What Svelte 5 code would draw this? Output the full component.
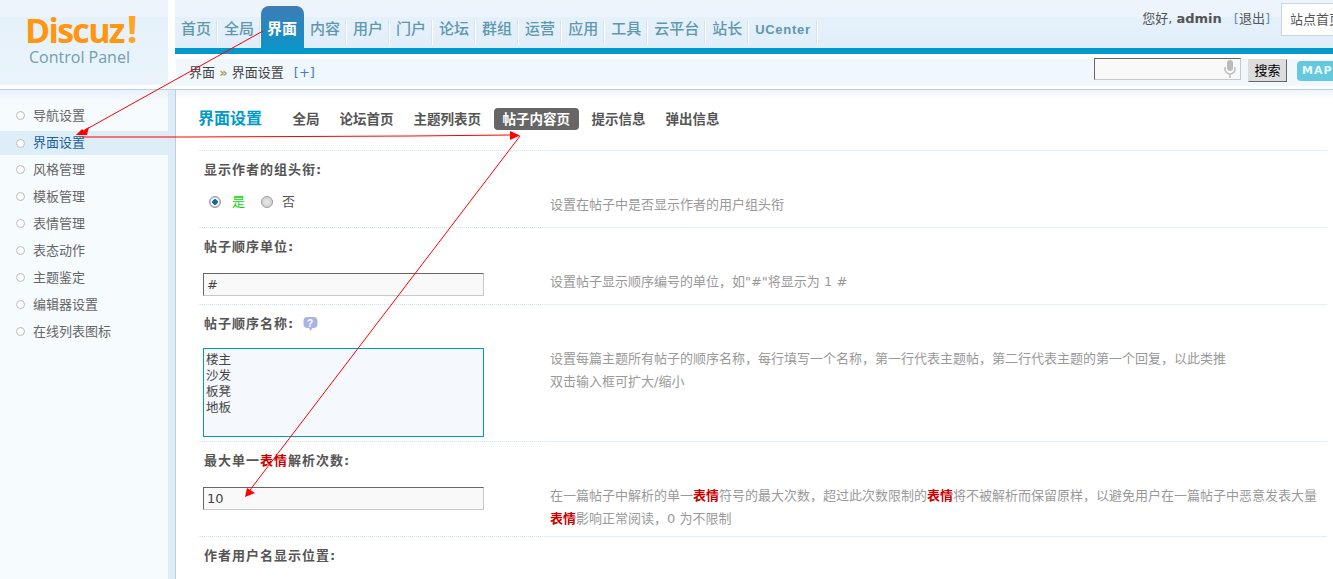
<script>
	const navItems = ['首页', '全局', '界面', '内容', '用户', '门户', '论坛', '群组', '运营', '应用', '工具', '云平台', '站长', 'UCenter'];
	const sideItems = ['导航设置', '界面设置', '风格管理', '模板管理', '表情管理', '表态动作', '主题鉴定', '编辑器设置', '在线列表图标'];
	const tabs = ['全局', '论坛首页', '主题列表页', '帖子内容页', '提示信息', '弹出信息'];
</script>

<div class="page">
	<header class="top">
		<div class="logo">
			<div class="brand">Discuz<span class="bang">!</span></div>
			<div class="sub">Control Panel</div>
		</div>
		<div class="top-main">
			<div class="nav-row">
				<nav class="nav">
					{#each navItems as item}
						<a class="nav-item" class:on={item === '界面'} class:latin={item === 'UCenter'}>{item}</a>
					{/each}
				</nav>
				<div class="user">
					<span>您好, <b>admin</b></span>
					<span class="logout"><i>[</i>退出<i>]</i></span>
					<div class="home-box">站点首页</div>
				</div>
			</div>
			<div class="bluebar"></div>
			<div class="crumb">
				<div class="path">界面 <span class="raquo">»</span> 界面设置 <span class="plus">[+]</span></div>
				<div class="search">
					<div class="search-input">
						<svg width="12" height="19" viewBox="0 0 12 19">
							<rect x="3" y="0" width="6" height="11" rx="3" fill="#bbb" />
							<path d="M1 7v2a5 5 0 0 0 10 0V7M6 14v4" fill="none" stroke="#bbb" stroke-width="1.5" />
						</svg>
					</div>
					<div class="search-btn">搜索</div>
					<div class="map">MAP</div>
				</div>
			</div>
		</div>
	</header>

	<div class="body">
		<aside class="side">
			<ul>
				{#each sideItems as item}
					<li class:on={item === '界面设置'}><span class="dot"></span>{item}</li>
				{/each}
			</ul>
		</aside>

		<main class="main">
			<div class="heading">
				<h3>界面设置</h3>
				<div class="tabs">
					{#each tabs as tab}
						<span class="tab" class:on={tab === '帖子内容页'}>{tab}</span>
					{/each}
				</div>
			</div>

			<section class="row" style="height: 77px">
				<div class="cell">
					<div class="label">显示作者的组头衔:</div>
					<div class="radios">
						<span class="radio checked"></span><span class="yes">是</span>
						<span class="radio"></span><span class="no">否</span>
					</div>
				</div>
				<div class="desc">设置在帖子中是否显示作者的用户组头衔</div>
			</section>

			<section class="row" style="height: 77px">
				<div class="cell">
					<div class="label">帖子顺序单位:</div>
					<div class="txt">#</div>
				</div>
				<div class="desc">设置帖子显示顺序编号的单位，如"#"将显示为 1 #</div>
			</section>

			<section class="row" style="height: 137px">
				<div class="cell">
					<div class="label">
						帖子顺序名称:
						<svg class="help" width="15" height="16" viewBox="0 0 15 16">
							<path d="M4.500 1h6a4 4 0 0 1 4 4v3a4 4 0 0 1-4 4H9.500L7.500 15 6 12H4.500a4 4 0 0 1-4-4V5a4 4 0 0 1 4-4z" fill="#a9b4e4" />
							<text x="7.5" y="10.5" text-anchor="middle">?</text>
						</svg>
					</div>
					<div class="area">楼主<br />沙发<br />板凳<br />地板</div>
				</div>
				<div class="desc">
					设置每篇主题所有帖子的顺序名称，每行填写一个名称，第一行代表主题帖，第二行代表主题的第一个回复，以此类推<br />双击输入框可扩大/缩小
				</div>
			</section>

			<section class="row" style="height: 95px">
				<div class="cell">
					<div class="label">最大单一<em>表情</em>解析次数:</div>
					<div class="txt num">10</div>
				</div>
				<div class="desc">
					在一篇帖子中解析的单一<em>表情</em>符号的最大次数，超过此次数限制的<em>表情</em>将不被解析而保留原样，以避免用户在一篇帖子中恶意发表大量<br /><em>表情</em>影响正常阅读，0 为不限制
				</div>
			</section>

			<section class="row last">
				<div class="cell">
					<div class="label">作者用户名显示位置:</div>
				</div>
			</section>
		</main>
	</div>

	<svg class="arrows" width="1333" height="579" viewBox="0 0 1333 579">
		<g fill="none" stroke="#f00" stroke-width="1">
			<path d="M263 31L85 130" />
			<path d="M82 137H187L410 136L510 135" />
			<path d="M520 136L250 490" />
		</g>
		<g fill="#f00">
			<path d="M76 135L89 127L87 135Z" />
			<path d="M76 135L82 129L87 135Z" />
			<path d="M510 131L520 135.500L510 140Z" />
			<path d="M245 497L247 488L255 493Z" />
		</g>
	</svg>
</div>

<style>
	:global(body) {
		background: #fff;
	}
	.page {
		position: relative;
		height: 579px;
		overflow: hidden;
		font: 13px/1.5 "DejaVu Sans", "Noto Sans CJK SC", sans-serif;
		color: #444;
		background: #fff;
	}

	.top {
		display: grid;
		grid-template-columns: 175px 1fr;
		height: 90px;
		border-bottom: 1px solid #b9d0e0;
		box-sizing: border-box;
		background: #fff;
	}
	.logo {
		height: 85px;
		padding: 11px 0 0 25px;
		box-sizing: border-box;
		margin-right: 7px;
		background: linear-gradient(#edf4fc 0, #edf4fc 17px, #e5f1fa 17px, #ebf4fb 85px);
	}
	.brand {
		font: bold 34px/34px "Open Sans", sans-serif;
		letter-spacing: -1.7px;
		color: #ff960f;
	}
	.bang {
		font-size: 38px;
		margin-left: 3px;
		color: #ffa424;
	}
	.sub {
		font: 16px/20px "Open Sans", sans-serif;
		color: #6f9fb2;
		margin: 0 0 0 4px;
	}

	.top-main {
		display: flex;
		flex-direction: column;
		min-width: 0;
		border-left: 1px solid #fff;
	}
	.nav-row {
		display: flex;
		height: 48px;
		margin-left: -1px;
		justify-content: space-between;
		background: linear-gradient(#edf4fc 0, #edf4fc 17px, #e5f1fa 17px, #e1eefa 48px);
	}
	.nav {
		display: flex;
		padding: 6px 0 0;
		height: 54px;
		box-sizing: border-box;
	}
	.nav-item {
		position: relative;
		display: block;
		padding: 0 7px 0 6px;
		height: 47px;
		line-height: 47px;
		font-size: 15px;
		font-weight: 500;
		color: #5f97ad;
		box-sizing: border-box;
		white-space: nowrap;
	}
	.nav-item::after {
		content: '';
		position: absolute;
		right: 0;
		top: 14px;
		height: 25px;
		width: 2px;
		background: #fff;
		border-left: 1px solid #d9e5ee;
		box-sizing: border-box;
	}
	.nav-item.on {
		width: 43px;
		color: #fff;
		font-weight: 700;
		background: linear-gradient(#3f7cb4, #0797cc);
		border-radius: 8px 8px 0 0;
	}
	.nav-item.on::after {
		display: none;
	}
	.nav-item.latin {
		font-size: 13px;
		font-weight: 700;
		font-family: "Liberation Sans", sans-serif;
		letter-spacing: 0.7px;
	}
	.user {
		display: flex;
		align-items: flex-start;
		flex: none;
		color: #555;
		padding-top: 3px;
		line-height: 31px;
		font-size: 13px;
	}
	.user b {
		color: #555;
	}
	.logout {
		margin: 0 11px 0 12px;
	}
	.logout i {
		font-style: normal;
		color: #5e8fc0;
	}
	.home-box {
		width: 52px;
		height: 33px;
		overflow: hidden;
		white-space: nowrap;
		padding-left: 8px;
		border: 1px solid #c5d8dd;
		border-right: 0;
		background: #fff;
		box-sizing: border-box;
	}

	.bluebar {
		height: 6px;
		background: #0099cc;
		margin-left: -1px;
	}
	.crumb {
		display: flex;
		justify-content: space-between;
		align-items: center;
		height: 27px;
		margin-top: 5px;
		background: #f0f8fd;
		padding-left: 13px;
	}
	.path {
		font-size: 13px;
		color: #444;
	}
	.raquo {
		color: #a89a55;
		font-weight: bold;
	}
	.plus {
		margin-left: 6px;
		color: #3f7ec0;
	}
	.search {
		display: flex;
		align-items: flex-start;
		height: 27px;
	}
	.search-input {
		display: flex;
		justify-content: flex-end;
		align-items: center;
		width: 147px;
		height: 22px;
		margin-top: -1px;
		padding-right: 4px;
		box-sizing: border-box;
		background: #f9f9f9;
		border: 1px solid #c8c8c8;
		border-top-color: #666;
		border-left-color: #666;
	}
	.search-btn {
		width: 39px;
		height: 23px;
		margin: 0 10px 0 7px;
		line-height: 21px;
		text-align: center;
		color: #000;
		box-sizing: border-box;
		background: #dcdcdc;
		border: 1px solid #dcdcdc;
		border-right-color: #666;
		border-bottom-color: #666;
	}
	.map {
		width: 36px;
		height: 20px;
		margin-top: 2px;
		padding-left: 5px;
		box-sizing: border-box;
		font: bold 11px/20px "DejaVu Sans", sans-serif;
		letter-spacing: 1px;
		color: #e8fafd;
		background: #66c8dd;
		border-radius: 4px 0 0 4px;
		overflow: hidden;
	}

	.body {
		display: grid;
		grid-template-columns: 175px 1fr;
		height: 489px;
	}
	.side {
		border-right: 7px solid #dcebf6;
		box-shadow: 1px 0 0 #b9d0e0;
		background: linear-gradient(#e8f2fa, #f6fbfe 12px);
		padding-top: 12px;
		box-sizing: border-box;
		width: 175px;
	}
	.side ul {
		margin: 0;
		padding: 0;
		list-style: none;
	}
	.side li {
		display: flex;
		align-items: center;
		height: 27px;
		padding-left: 16px;
		color: #666;
		font-size: 13px;
	}
	.side li.on {
		height: 24px;
		margin: 2px 0 1px;
		color: #1c5f9c;
		background: #deeef9;
	}
	.dot {
		width: 7px;
		height: 7px;
		margin-right: 8px;
		border: 1px solid #bbb;
		border-radius: 50%;
		background: #fff;
	}

	.main {
		margin-left: 1px;
		padding: 0 6px 0 22px;
		background: linear-gradient(#edf4fa, #fff 9px);
		min-width: 0;
	}
	.heading {
		display: flex;
		align-items: flex-start;
		height: 61px;
		padding-top: 18px;
		box-sizing: border-box;
		background:
			linear-gradient(#e3eff9, #e3eff9) 346px 100%/100% 1px no-repeat,
			repeating-linear-gradient(90deg, #cfe5f3 0 1px, transparent 1px 2px) 0 100%/346px 1px no-repeat;
	}
	h3 {
		margin: 0 14px 0 0;
		width: 72px;
		line-height: 22px;
		font-size: 16px;
		font-weight: 700;
		color: #0099cc;
		flex: none;
	}
	.tabs {
		display: flex;
		align-items: center;
		gap: 3px;
	}
	.tab {
		padding: 0 8.500px;
		height: 22px;
		line-height: 22px;
		font-size: 13.500px;
		font-weight: 700;
		color: #555;
	}
	.tab.on {
		margin: 0 1px;
		padding: 0 9px;
		border-radius: 4px;
		color: #fff;
		background: #666;
	}

	.row {
		display: grid;
		grid-template-columns: 352px 1fr;
		box-sizing: border-box;
		background:
			linear-gradient(#e3eff9, #e3eff9) 346px 100%/100% 1px no-repeat,
			repeating-linear-gradient(90deg, #cfe5f3 0 1px, transparent 1px 2px) 0 100%/346px 1px no-repeat;
	}
	.row.last {
		background: none;
	}
	.cell {
		padding: 9px 0 0 5px;
	}
	.label {
		display: flex;
		align-items: center;
		height: 20px;
		margin-left: 1px;
		font-size: 13px;
		font-weight: 700;
		letter-spacing: 1px;
		color: #555;
	}
	em {
		font-style: normal;
		font-weight: 700;
		color: #c00;
	}
	.help {
		margin-left: 9px;
	}
	.help text {
		font: bold 10px "Liberation Sans", sans-serif;
		fill: #fff;
	}
	.radios {
		display: flex;
		align-items: center;
		height: 20px;
		margin: 12px 0 0 6px;
	}
	.radio {
		width: 12px;
		height: 12px;
		box-sizing: border-box;
		border: 1px solid #999;
		border-radius: 50%;
		background: radial-gradient(#e8e8e8, #ccc);
	}
	.radio.checked {
		background: radial-gradient(#0b6aa8 0 2.500px, #fff 3px 4px, #ccc 4.500px);
	}
	.yes {
		margin: 0 16px 0 11px;
		color: #00dd00;
	}
	.no {
		margin-left: 9px;
		color: #555;
	}
	.txt {
		width: 281px;
		height: 23px;
		margin-top: 16px;
		padding-left: 3px;
		box-sizing: border-box;
		background: #f9f9f9;
		border: 1px solid #c8c8c8;
		border-top-color: #666;
		border-left-color: #666;
		line-height: 22px;
		font-size: 13px;
		color: #444;
	}
	.area {
		width: 281px;
		height: 89px;
		margin-top: 14px;
		padding: 3px 2px;
		box-sizing: border-box;
		background: #f5f9fd;
		border: 1px solid #0099cc;
		font-size: 12.500px;
		line-height: 16px;
		color: #444;
	}
	.desc {
		padding-top: 42px;
		color: #999;
		font-size: 13px;
		line-height: 23px;
		white-space: nowrap;
	}

	.arrows {
		position: absolute;
		left: 0;
		top: 0;
		pointer-events: none;
	}
</style>
